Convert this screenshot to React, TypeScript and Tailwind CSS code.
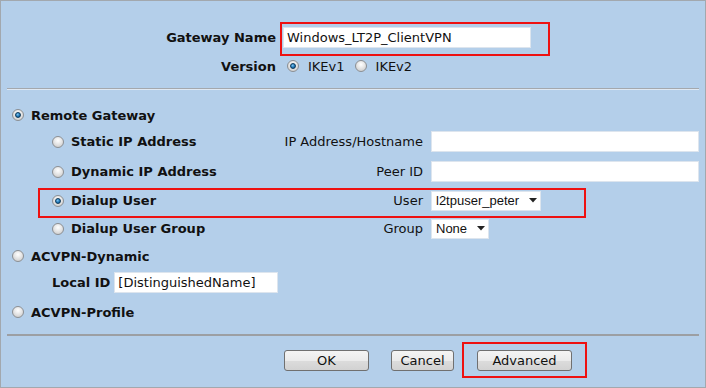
import React from "react";

function Radio({ checked = false, className = "" }: { checked?: boolean; className?: string }) {
  return (
    <span
      className={`relative inline-flex h-[12px] w-[12px] shrink-0 items-center justify-center rounded-full border border-[#8c8f93] bg-[radial-gradient(circle_at_50%_35%,#ffffff_0%,#e6e6e6_45%,#c4c4c4_100%)] ${className}`}
    >
      {checked && (
        <span className="block h-[6px] w-[6px] rounded-full border border-[#0d3a5c] bg-[radial-gradient(circle_at_40%_35%,#7fc3f0_0%,#1f78b8_55%,#0b4a7a_100%)]" />
      )}
    </span>
  );
}

function Arrow() {
  return (
    <svg width="8" height="5" viewBox="0 0 8 5" className="shrink-0">
      <path d="M0 0 L8 0 L4 4.5 Z" fill="#222" />
    </svg>
  );
}

function Btn({ label, w, className = "" }: { label: string; w: string; className?: string }) {
  return (
    <div
      className={`flex h-[21px] items-center justify-center rounded-[3px] border border-[#707070] bg-[linear-gradient(#f4f4f4,#ebebeb_50%,#dcdcdc_51%,#d2d2d2)] text-[13px] text-[#111] ${w} ${className}`}
    >
      {label}
    </div>
  );
}

export default function App() {
  return (
    <div className="relative h-[388px] w-[706px] overflow-hidden border border-[#a2a8ae] bg-[#b4cfea] font-['DejaVu_Sans',Verdana,sans-serif] text-[13px] leading-none text-[#111]">
      {/* Top section */}
      <div className="pt-[26px]">
        <div className="flex h-[21px] items-center">
          <div className="w-[275px] text-right font-bold">Gateway Name</div>
          <div className="ml-[7px] flex h-[21px] w-[248px] items-center border border-[#dde5ee] bg-white pl-[3px]">
            Windows_LT2P_ClientVPN
          </div>
        </div>
        <div className="mt-[9px] flex h-[18px] items-center">
          <div className="w-[275px] text-right font-bold">Version</div>
          <Radio checked className="ml-[11px]" />
          <span className="ml-[9px]">IKEv1</span>
          <Radio className="ml-[10px]" />
          <span className="ml-[9px]">IKEv2</span>
        </div>
      </div>

      <div className="mx-[6px] mt-[13px] h-[2px] border-t border-b border-t-[#a4a8ad] border-b-[#dfe9f4]" />

      {/* Remote gateway */}
      <div className="mt-[17px] flex h-[16px] items-center">
        <Radio checked className="ml-[11px]" />
        <span className="ml-[7px] font-bold">Remote Gateway</span>
      </div>

      <div className="mt-[8px] flex h-[21px] items-center">
        <div className="flex w-[264px] items-center pl-[51px]">
          <Radio />
          <span className="ml-[7px] font-bold">Static IP Address</span>
        </div>
        <div className="w-[158px] text-right">IP Address/Hostname</div>
        <div className="ml-[8px] h-[21px] w-[268px] border border-[#dde5ee] bg-white" />
      </div>

      <div className="mt-[9px] flex h-[21px] items-center">
        <div className="flex w-[264px] items-center pl-[51px]">
          <Radio />
          <span className="ml-[7px] font-bold">Dynamic IP Address</span>
        </div>
        <div className="w-[158px] text-right">Peer ID</div>
        <div className="ml-[8px] h-[21px] w-[268px] border border-[#dde5ee] bg-white" />
      </div>

      <div className="mt-[8px] flex h-[21px] items-center">
        <div className="flex w-[264px] items-center pl-[51px]">
          <Radio checked />
          <span className="ml-[7px] font-bold">Dialup User</span>
        </div>
        <div className="w-[158px] text-right">User</div>
        <div className="ml-[8px] flex h-[20px] w-[110px] items-center border border-[#dde5ee] bg-white pl-[4px] font-['Liberation_Sans',Arial,sans-serif]">
          <span>l2tpuser_peter</span>
          <span className="ml-[10px]"><Arrow /></span>
        </div>
      </div>

      <div className="mt-[7px] flex h-[21px] items-center">
        <div className="flex w-[264px] items-center pl-[51px]">
          <Radio />
          <span className="ml-[7px] font-bold">Dialup User Group</span>
        </div>
        <div className="w-[158px] text-right">Group</div>
        <div className="ml-[8px] flex h-[20px] w-[58px] items-center border border-[#dde5ee] bg-white pl-[4px] font-['Liberation_Sans',Arial,sans-serif]">
          <span>None</span>
          <span className="ml-[10px]"><Arrow /></span>
        </div>
      </div>

      {/* ACVPN */}
      <div className="mt-[9px] flex h-[16px] items-center">
        <Radio className="ml-[11px]" />
        <span className="ml-[7px] font-bold">ACVPN-Dynamic</span>
      </div>

      <div className="mt-[8px] flex h-[21px] items-center">
        <span className="ml-[51px] whitespace-nowrap font-bold">Local ID</span>
        <div className="ml-[4px] flex h-[21px] w-[164px] items-center border border-[#dde5ee] bg-white pl-[3px]">
          [DistinguishedName]
        </div>
      </div>

      <div className="mt-[11px] flex h-[16px] items-center">
        <Radio className="ml-[11px]" />
        <span className="ml-[7px] font-bold">ACVPN-Profile</span>
      </div>

      <div className="mx-[6px] mt-[14px] h-[2px] bg-[#9c9fa3]" />

      {/* Buttons */}
      <div className="mt-[14px] flex items-center pl-[283px]">
        <Btn label="OK" w="w-[85px]" />
        <Btn label="Cancel" w="w-[63px]" className="ml-[22px]" />
        <Btn label="Advanced" w="w-[95px]" className="ml-[23px]" />
      </div>

      {/* Red annotation boxes */}
      <div className="pointer-events-none absolute left-[279px] top-[21px] h-[34px] w-[270px] border-2 border-[#ee1111]" />
      <div className="pointer-events-none absolute left-[37px] top-[187px] h-[30px] w-[548px] border-2 border-[#ee1111]" />
      <div className="pointer-events-none absolute left-[461px] top-[341px] h-[36px] w-[125px] border-2 border-[#ee1111]" />
    </div>
  );
}
